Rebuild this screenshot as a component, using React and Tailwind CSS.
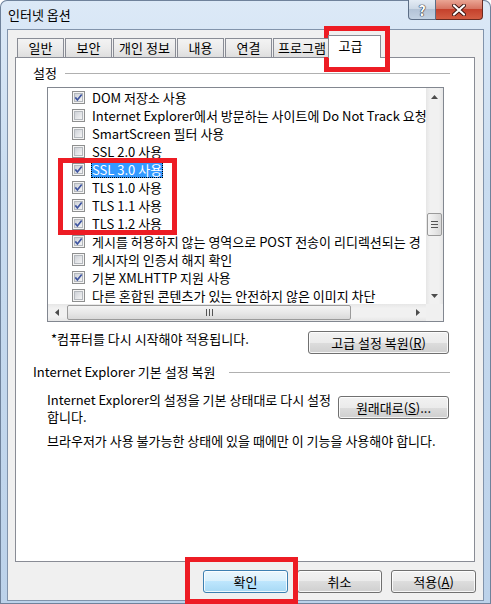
import React from 'react'

const items = [
  { on: true, label: 'DOM 저장소 사용' },
  { on: false, label: 'Internet Explorer에서 방문하는 사이트에 Do Not Track 요청 보' },
  { on: false, label: 'SmartScreen 필터 사용' },
  { on: false, label: 'SSL 2.0 사용' },
  { on: true, label: 'SSL 3.0 사용', selected: true },
  { on: true, label: 'TLS 1.0 사용' },
  { on: true, label: 'TLS 1.1 사용' },
  { on: true, label: 'TLS 1.2 사용' },
  { on: true, label: '게시를 허용하지 않는 영역으로 POST 전송이 리디렉션되는 경' },
  { on: false, label: '게시자의 인증서 해지 확인' },
  { on: true, label: '기본 XMLHTTP 지원 사용' },
  { on: false, label: '다른 혼합된 콘텐츠가 있는 안전하지 않은 이미지 차단' },
]

const tabs = [
  { label: '일반', w: 'w-[47px]' },
  { label: '보안', w: 'w-[47px]' },
  { label: '개인 정보', w: 'w-[63px]' },
  { label: '내용', w: 'w-[47px]' },
  { label: '연결', w: 'w-[47px]' },
  { label: '프로그램', w: 'w-[58px]' },
]

function Check({ on, id }) {
  return (
    <svg width="13" height="13" viewBox="0 0 13 13" className="shrink-0">
      <defs>
        <linearGradient id={`cb${id}`} x1="0" y1="0" x2="1" y2="1">
          <stop offset="0" stopColor="#cbcfd5" />
          <stop offset="1" stopColor="#f7f7f7" />
        </linearGradient>
      </defs>
      <rect x="0.5" y="0.5" width="12" height="12" fill="#f4f4f4" stroke="#8e8f8f" />
      <rect x="2.5" y="2.5" width="8" height="8" fill={`url(#cb${id})`} stroke="#b4b8bd" />
      {on && <path d="M3.3 6.4 L5.4 9 L9.7 3.4" fill="none" stroke="#3f55a0" strokeWidth="1.7" />}
    </svg>
  )
}

function Btn({ children, w, focus }) {
  return (
    <div
      className={`${w} h-[23px] rounded-[3px] border flex items-center justify-center text-[13px] leading-[16px] text-black shadow-[inset_0_0_0_1px_rgba(255,255,255,0.8)] ${
        focus
          ? 'border-[#3c7fb1] bg-[linear-gradient(180deg,#eaf6fd_0%,#d9f0fc_50%,#bee6fd_50%,#a7d9f5_100%)]'
          : 'border-[#707070] bg-[linear-gradient(180deg,#f2f2f2_0%,#ebebeb_50%,#dddddd_50%,#cfcfcf_100%)]'
      }`}
    >
      {children}
    </div>
  )
}

function Tri({ dir }) {
  const pts = {
    up: '0,4 3.5,0 7,4',
    down: '0,0 7,0 3.5,4',
    left: '4,0 4,7 0,3.5',
    right: '0,0 0,7 4,3.5',
  }[dir]
  const horiz = dir === 'left' || dir === 'right'
  return (
    <svg width={horiz ? 4 : 7} height={horiz ? 7 : 4} viewBox={horiz ? '0 0 4 7' : '0 0 7 4'}>
      <polygon points={pts} fill="#4d4d4d" />
    </svg>
  )
}

export default function App() {
  return (
    <div className="relative w-[491px] h-[604px] overflow-hidden rounded-t-[7px] bg-[linear-gradient(180deg,#dce9f7_0%,#c9dcf0_30%,#bcd2ea_100%)] shadow-[inset_0_0_0_1px_#6f829b] font-['Noto_Sans_CJK_KR','Noto_Sans',sans-serif] text-black">
      {/* ── Title bar ───────────────────────────── */}
      <div className="h-[29px] flex items-start">
        <span className="pl-[8px] pt-[7px] text-[13px] leading-[16px] text-black">인터넷 옵션</span>
        <div className="ml-auto mr-[8px] flex">
          <div className="w-[28px] h-[20px] rounded-bl-[4px] border border-t-0 border-[#5c6e86] bg-[linear-gradient(180deg,#e4ecf5_0%,#cbd7e5_50%,#b3c3d6_50%,#c3d2e3_100%)] flex items-center justify-center">
            <span className="text-white font-bold text-[14px] leading-[14px] [text-shadow:0_0_1px_#223,0_0_1px_#223,0_0_1px_#223]">?</span>
          </div>
          <div className="w-[47px] h-[20px] rounded-br-[4px] border border-t-0 border-l-0 border-[#6b2a20] bg-[linear-gradient(180deg,#eaa594_0%,#d77563_45%,#c5412c_50%,#d35d43_100%)] flex items-center justify-center">
            <svg width="14" height="12" viewBox="0 0 14 12">
              <path d="M2 1.5 L12 10.5 M12 1.5 L2 10.5" stroke="#3b1410" strokeWidth="4" strokeLinecap="round" />
              <path d="M2 1.5 L12 10.5 M12 1.5 L2 10.5" stroke="#ffffff" strokeWidth="2.2" strokeLinecap="round" />
            </svg>
          </div>
        </div>
      </div>

      {/* ── Client area ─────────────────────────── */}
      <div className="mx-[7px] h-[572px] border border-[#8193ab] bg-[#f0f0f0] flex flex-col pt-[5px]">
        <div className="ml-[7px] w-[460px]">
          {/* Tabs */}
          <div className="relative z-10 flex items-end pl-[2px] h-[22px] text-[13px] leading-[16px]">
            {tabs.map(t => (
              <div
                key={t.label}
                className={`${t.w} h-[19px] mr-[1px] border border-b-0 border-[#898c95] bg-[linear-gradient(180deg,#f3f3f3_0%,#ebebeb_50%,#dedede_100%)] flex items-center justify-center whitespace-nowrap overflow-visible`}
              >
                {t.label}
              </div>
            ))}
            <div className="-ml-[4px] w-[53px] h-[23px] -mb-[1px] border border-b-0 border-[#898c95] bg-white flex justify-center pt-[2px] pr-[8px]">
              고급
            </div>
          </div>

          {/* Panel */}
          <div className="h-[505px] border border-[#898c95] bg-white text-[13px]">
            <div className="pl-[17px] pr-[24px] pt-[7px] h-[23px] flex items-center">
              <span className="leading-[16px]">설정</span>
              <div className="flex-1 h-px ml-[8px] bg-[#b0b0b0]" />
            </div>

            {/* List box */}
            <div className="ml-[31px] mt-[6px] w-[397px] h-[235px] border border-[#828790] grid grid-cols-[1fr_17px] grid-rows-[1fr_17px]">
              <div className="overflow-hidden">
                {items.map((it, i) => (
                  <div key={i} className="h-[18px] flex items-center pl-[24px] gap-[6px] whitespace-nowrap">
                    <Check on={it.on} id={i} />
                    <span
                      className={`px-[1px] h-[17px] leading-[17px] ${
                        it.selected ? 'bg-[#3399ff] text-white outline-1 outline-dotted outline-black -outline-offset-1' : ''
                      }`}
                    >
                      {it.label}
                    </span>
                  </div>
                ))}
              </div>

              {/* vertical scrollbar */}
              <div className="flex flex-col bg-[linear-gradient(90deg,#e6e6e6_0%,#f1f1f1_25%,#f1f1f1_75%,#e6e6e6_100%)]">
                <div className="h-[17px] flex items-center justify-center"><Tri dir="up" /></div>
                <div className="h-[108px]" />
                <div className="mx-[1px] h-[23px] rounded-[2px] border border-[#9a9a9a] bg-[linear-gradient(90deg,#f4f4f4_0%,#e8e8e8_50%,#d9d9d9_100%)] flex flex-col items-center justify-center gap-[2px]">
                  <div className="w-[7px] h-px bg-[#555]" />
                  <div className="w-[7px] h-px bg-[#555]" />
                  <div className="w-[7px] h-px bg-[#555]" />
                </div>
                <div className="flex-1" />
                <div className="h-[17px] flex items-center justify-center"><Tri dir="down" /></div>
              </div>

              {/* horizontal scrollbar */}
              <div className="flex bg-[linear-gradient(180deg,#e6e6e6_0%,#f1f1f1_25%,#f1f1f1_75%,#e6e6e6_100%)]">
                <div className="w-[17px] flex items-center justify-center"><Tri dir="left" /></div>
                <div className="ml-[2px] my-[1px] w-[284px] rounded-[2px] border border-[#9a9a9a] bg-[linear-gradient(180deg,#f4f4f4_0%,#e8e8e8_50%,#d9d9d9_100%)] flex items-center justify-center gap-[2px]">
                  <div className="w-px h-[7px] bg-[#555]" />
                  <div className="w-px h-[7px] bg-[#555]" />
                  <div className="w-px h-[7px] bg-[#555]" />
                </div>
                <div className="flex-1" />
                <div className="w-[17px] flex items-center justify-center"><Tri dir="right" /></div>
              </div>
              <div className="bg-[#f0f0f0]" />
            </div>

            {/* restart note + reset advanced */}
            <div className="mt-[9px] flex items-start">
              <span className="pl-[35px] leading-[16px]">*컴퓨터를 다시 시작해야 적용됩니다.</span>
              <div className="ml-auto mr-[25px]">
                <Btn w="w-[141px]">고급 설정 복원(<span className="underline">R</span>)</Btn>
              </div>
            </div>

            <div className="mt-[10px] pl-[17px] pr-[24px] h-[16px] flex items-center">
              <span className="leading-[16px]">Internet Explorer 기본 설정 복원</span>
              <div className="flex-1 h-px ml-[14px] bg-[#b0b0b0]" />
            </div>

            <div className="mt-[11px] flex items-start">
              <p className="pl-[31px] leading-[17px]">
                Internet Explorer의 설정을 기본 상태대로 다시 설정
                <br />
                합니다.
              </p>
              <div className="ml-auto mr-[25px] mt-[5px]">
                <Btn w="w-[111px]">원래대로(<span className="underline">S</span>)...</Btn>
              </div>
            </div>

            <p className="mt-[7px] pl-[31px] leading-[17px]">
              브라우저가 사용 불가능한 상태에 있을 때에만 이 기능을 사용해야 합니다.
            </p>
          </div>
        </div>

        {/* Dialog buttons */}
        <div className="mt-[8px] flex justify-end gap-[9px] pr-[7px]">
          <Btn w="w-[85px]" focus>확인</Btn>
          <Btn w="w-[85px]">취소</Btn>
          <Btn w="w-[85px]">적용(<span className="underline">A</span>)</Btn>
        </div>
      </div>

      {/* ── Red highlight boxes ─────────────────── */}
      <div className="absolute left-[324px] top-[26px] w-[66px] h-[46px] border-[5px] border-[#ed1c24]" />
      <div className="absolute left-[58px] top-[158px] w-[119px] h-[77px] border-[5px] border-[#ed1c24]" />
      <div className="absolute left-[185px] top-[557px] w-[113px] h-[47px] border-[5px] border-[#ed1c24]" />
    </div>
  )
}
